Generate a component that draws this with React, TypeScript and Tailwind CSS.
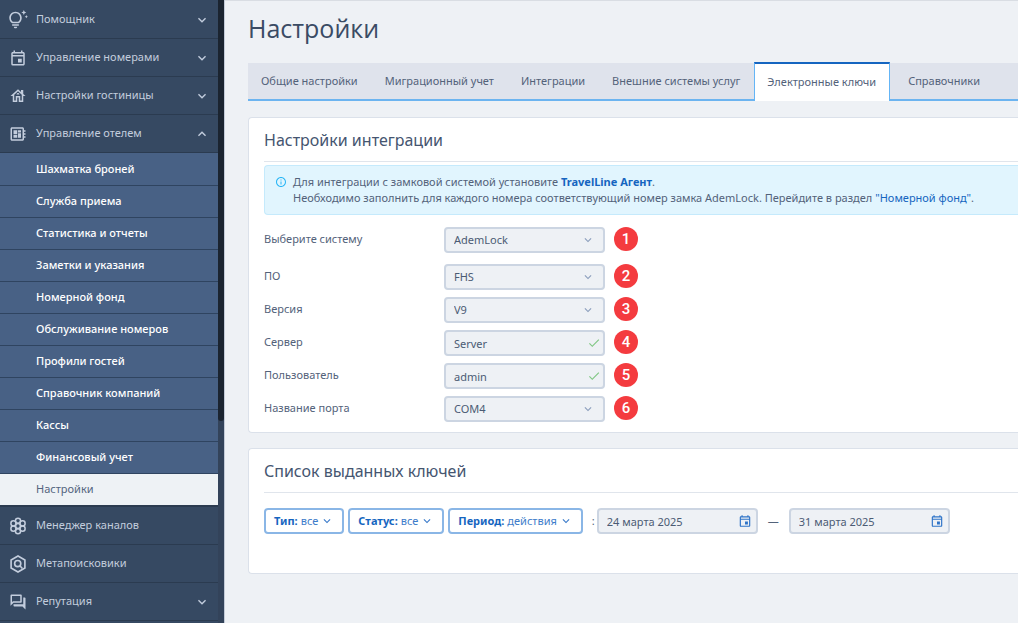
import { useState, type ReactNode } from "react";
import {
  MdCheck,
  MdInfoOutline,
  MdKeyboardArrowDown,
  MdKeyboardArrowUp,
  MdOutlineDeveloperBoard,
  MdOutlineEvent,
  MdOutlineForum,
  MdOutlineHouse,
  MdOutlineTipsAndUpdates,
} from "react-icons/md";

function ChannelsIcon() {
  const centers = [
    [12, 12],
    [12, 5],
    [12, 19],
    [5.9, 8.5],
    [18.1, 8.5],
    [5.9, 15.5],
    [18.1, 15.5],
  ];
  return (
    <svg viewBox="0 0 24 24" className="size-[18px]" fill="none" stroke="currentColor" strokeWidth="2">
      {centers.map(([x, y]) => (
        <circle key={`${x}-${y}`} cx={x} cy={y} r="3.4" />
      ))}
    </svg>
  );
}

function MetasearchIcon() {
  return (
    <svg viewBox="0 0 24 24" className="size-[18px]" fill="none" stroke="currentColor" strokeWidth="2.2">
      <path d="M12 1.4 21.2 6.7v10.6L12 22.6 2.8 17.3V6.7z" />
      <circle cx="11.6" cy="11.4" r="4.1" />
      <path d="m14.5 14.4 3.4 3.6" />
    </svg>
  );
}

type Section = { label: string; icon: ReactNode; arrow?: "up" | "down" };

const topSections: Section[] = [
  { label: "Помощник", icon: <MdOutlineTipsAndUpdates className="size-5" />, arrow: "down" },
  { label: "Управление номерами", icon: <MdOutlineEvent className="size-[18px]" />, arrow: "down" },
  { label: "Настройки гостиницы", icon: <MdOutlineHouse className="size-[18px]" />, arrow: "down" },
  { label: "Управление отелем", icon: <MdOutlineDeveloperBoard className="size-[18px]" />, arrow: "up" },
];

const bottomSections: Section[] = [
  { label: "Менеджер каналов", icon: <ChannelsIcon /> },
  { label: "Метапоисковики", icon: <MetasearchIcon /> },
  { label: "Репутация", icon: <MdOutlineForum className="size-[18px]" />, arrow: "down" },
];

const hotelPages = [
  "Шахматка броней",
  "Служба приема",
  "Статистика и отчеты",
  "Заметки и указания",
  "Номерной фонд",
  "Обслуживание номеров",
  "Профили гостей",
  "Справочник компаний",
  "Кассы",
  "Финансовый учет",
  "Настройки",
];

function SectionRow({ label, icon, arrow }: Section) {
  return (
    <button type="button" className="flex h-[38px] w-full shrink-0 items-center border-b border-[#2b3b50] pr-2 pl-2 text-left text-[#c3cddd]">
      <span className="flex w-5 justify-center">{icon}</span>
      <span className="ml-2 flex-1">{label}</span>
      {arrow === "down" && <MdKeyboardArrowDown className="size-4" />}
      {arrow === "up" && <MdKeyboardArrowUp className="size-4" />}
    </button>
  );
}

function Sidebar() {
  return (
    <aside className="flex w-[225px] shrink-0 border-r border-[#c3cbd8] bg-[#33435a]">
      <nav className="flex flex-1 flex-col bg-[#364962] pt-px">
        {topSections.map((s) => (
          <SectionRow key={s.label} {...s} />
        ))}
        <ul className="border-b-2 border-[#2b3b50] bg-[#486185] pt-px">
          {hotelPages.map((page) => (
            <li key={page}>
              <a
                href="#"
                className={
                  page === "Настройки"
                    ? "flex h-[31px] items-center bg-[#eef2f5] pl-9 text-[#53647e]"
                    : "flex h-8 items-center border-b border-[#2f4460] bg-[#486185] pl-9 font-medium text-white"
                }
              >
                {page}
              </a>
            </li>
          ))}
        </ul>
        {bottomSections.map((s) => (
          <SectionRow key={s.label} {...s} />
        ))}
      </nav>
      <div className="w-1.5">
        <div className="h-[421px] rounded-b-sm bg-[#1b2430]" />
      </div>
    </aside>
  );
}

const tabs = ["Общие настройки", "Миграционный учет", "Интеграции", "Внешние системы услуг", "Электронные ключи", "Справочники"];

function Tabs() {
  const [active, setActive] = useState("Электронные ключи");
  return (
    <div role="tablist" className="mt-[15px] flex h-[39px] items-end overflow-hidden whitespace-nowrap">
      {tabs.map((tab) => (
        <button
          key={tab}
          type="button"
          role="tab"
          aria-selected={tab === active}
          onClick={() => setActive(tab)}
          className={
            tab === active
              ? "h-[39px] shrink-0 border-x border-t-2 border-x-[#64b5f6] border-t-[#1565c0] bg-white pr-[13px] pl-3"
              : "h-[38px] shrink-0 border-b-2 border-[#6cb4f0] bg-[#dfe3ec] pr-3.5 pl-[13px] last:grow last:pl-[18px] last:text-left"
          }
        >
          {tab}
        </button>
      ))}
    </div>
  );
}

function Card({ title, children }: { title: string; children: ReactNode }) {
  return (
    <section className="rounded-l border border-r-0 border-[#dbe1ea] bg-white pl-[15px]">
      <h2 className="flex h-11 items-center border-b border-[#e0e5ec] text-base text-[#455570]">{title}</h2>
      {children}
    </section>
  );
}

type Field = { id: string; label: string; value: string; kind: "select" | "text" };

const fields: Field[] = [
  { id: "system", label: "Выберите систему", value: "AdemLock", kind: "select" },
  { id: "software", label: "ПО", value: "FHS", kind: "select" },
  { id: "version", label: "Версия", value: "V9", kind: "select" },
  { id: "server", label: "Сервер", value: "Server", kind: "text" },
  { id: "user", label: "Пользователь", value: "admin", kind: "text" },
  { id: "port", label: "Название порта", value: "COM4", kind: "select" },
];

const control = "h-[26px] w-full appearance-none rounded-[4px] border-2 border-[#ccd5e2] bg-[#eef1f5] px-2 text-[#4b5b74] outline-none";

function FieldRow({ field, index }: { field: Field; index: number }) {
  return (
    <div className="flex h-[26px] items-center first:mb-1">
      <label htmlFor={field.id} className="w-[180px] pb-0.5">
        {field.label}
      </label>
      <div className="relative w-[161px]">
        {field.kind === "select" ? (
          <>
            <select id={field.id} defaultValue={field.value} className={control}>
              <option>{field.value}</option>
            </select>
            <MdKeyboardArrowDown className="pointer-events-none absolute top-1.5 right-2.5 size-3.5 text-[#8c9fbd]" />
          </>
        ) : (
          <>
            <input id={field.id} type="text" defaultValue={field.value} className={control} />
            <MdCheck className="pointer-events-none absolute top-1.5 right-1 size-3.5 text-[#81c784]" />
          </>
        )}
      </div>
      <span className="ml-[9px] flex size-6 items-center justify-center self-start rounded-full bg-[#f43b3f] font-['Roboto',sans-serif] text-[15px] font-medium text-white">
        {index + 1}
      </span>
    </div>
  );
}

function FilterButton({ name, value }: { name: string; value: string }) {
  return (
    <button type="button" className="flex h-[26px] shrink-0 items-center rounded-[4px] border-2 border-[#8ab6e6] px-2 text-[#3d7cca]">
      <b className="mr-[3px] text-[#1565c0]">{name}:</b>
      {value}
      <MdKeyboardArrowDown className="ml-0.5 size-3.5" />
    </button>
  );
}

function DateField({ label, value }: { label: string; value: string }) {
  return (
    <div className="relative w-[161px] shrink-0">
      <input aria-label={label} type="text" defaultValue={value} className={control} />
      <MdOutlineEvent className="pointer-events-none absolute top-1.5 right-1.5 size-3.5 text-[#2f74c8]" />
    </div>
  );
}

export default function App() {
  return (
    <div className="flex min-h-screen overflow-hidden bg-[#eef1f5] font-['Noto_Sans',sans-serif] text-[11px] text-[#53627a]">
      <Sidebar />
      <main className="min-w-0 flex-1 border-t border-[#d9dde3] pl-[23px]">
        <h1 className="mt-2.5 flex h-9 items-center font-['Open_Sans',sans-serif] text-[25px] text-[#3a4b64]">Настройки</h1>
        <Tabs />
        <div className="mt-4 flex flex-col gap-[15px]">
          <Card title="Настройки интеграции">
            <div className="mt-[3px] flex rounded-l border border-r-0 border-[#c5eafc] bg-[#e1f5fe] py-2 pl-2.5 leading-4">
              <MdInfoOutline className="mt-0.5 size-3 text-[#29b6f6]" />
              <p className="ml-1.5">
                Для интеграции с замковой системой установите{" "}
                <a href="#" className="font-bold text-[#1565c0]">
                  TravelLine Агент
                </a>
                .
                <br />
                Необходимо заполнить для каждого номера соответствующий номер замка AdemLock. Перейдите в раздел{" "}
                <a href="#" className="text-[#1565c0]">
                  "Номерной фонд"
                </a>
                .
              </p>
            </div>
            <form className="mt-3 mb-2.5 flex flex-col gap-[7px]">
              {fields.map((field, i) => (
                <FieldRow key={field.id} field={field} index={i} />
              ))}
            </form>
          </Card>
          <Card title="Список выданных ключей">
            <div className="mt-[15px] mb-[39px] flex items-center">
              <div className="flex gap-1">
                <FilterButton name="Тип" value="все" />
                <FilterButton name="Статус" value="все" />
                <FilterButton name="Период" value="действия" />
              </div>
              <span className="mr-0.5 ml-[9px]">:</span>
              <DateField label="Дата начала" value="24 марта 2025" />
              <span className="mx-2.5">—</span>
              <DateField label="Дата окончания" value="31 марта 2025" />
            </div>
          </Card>
        </div>
      </main>
    </div>
  );
}
